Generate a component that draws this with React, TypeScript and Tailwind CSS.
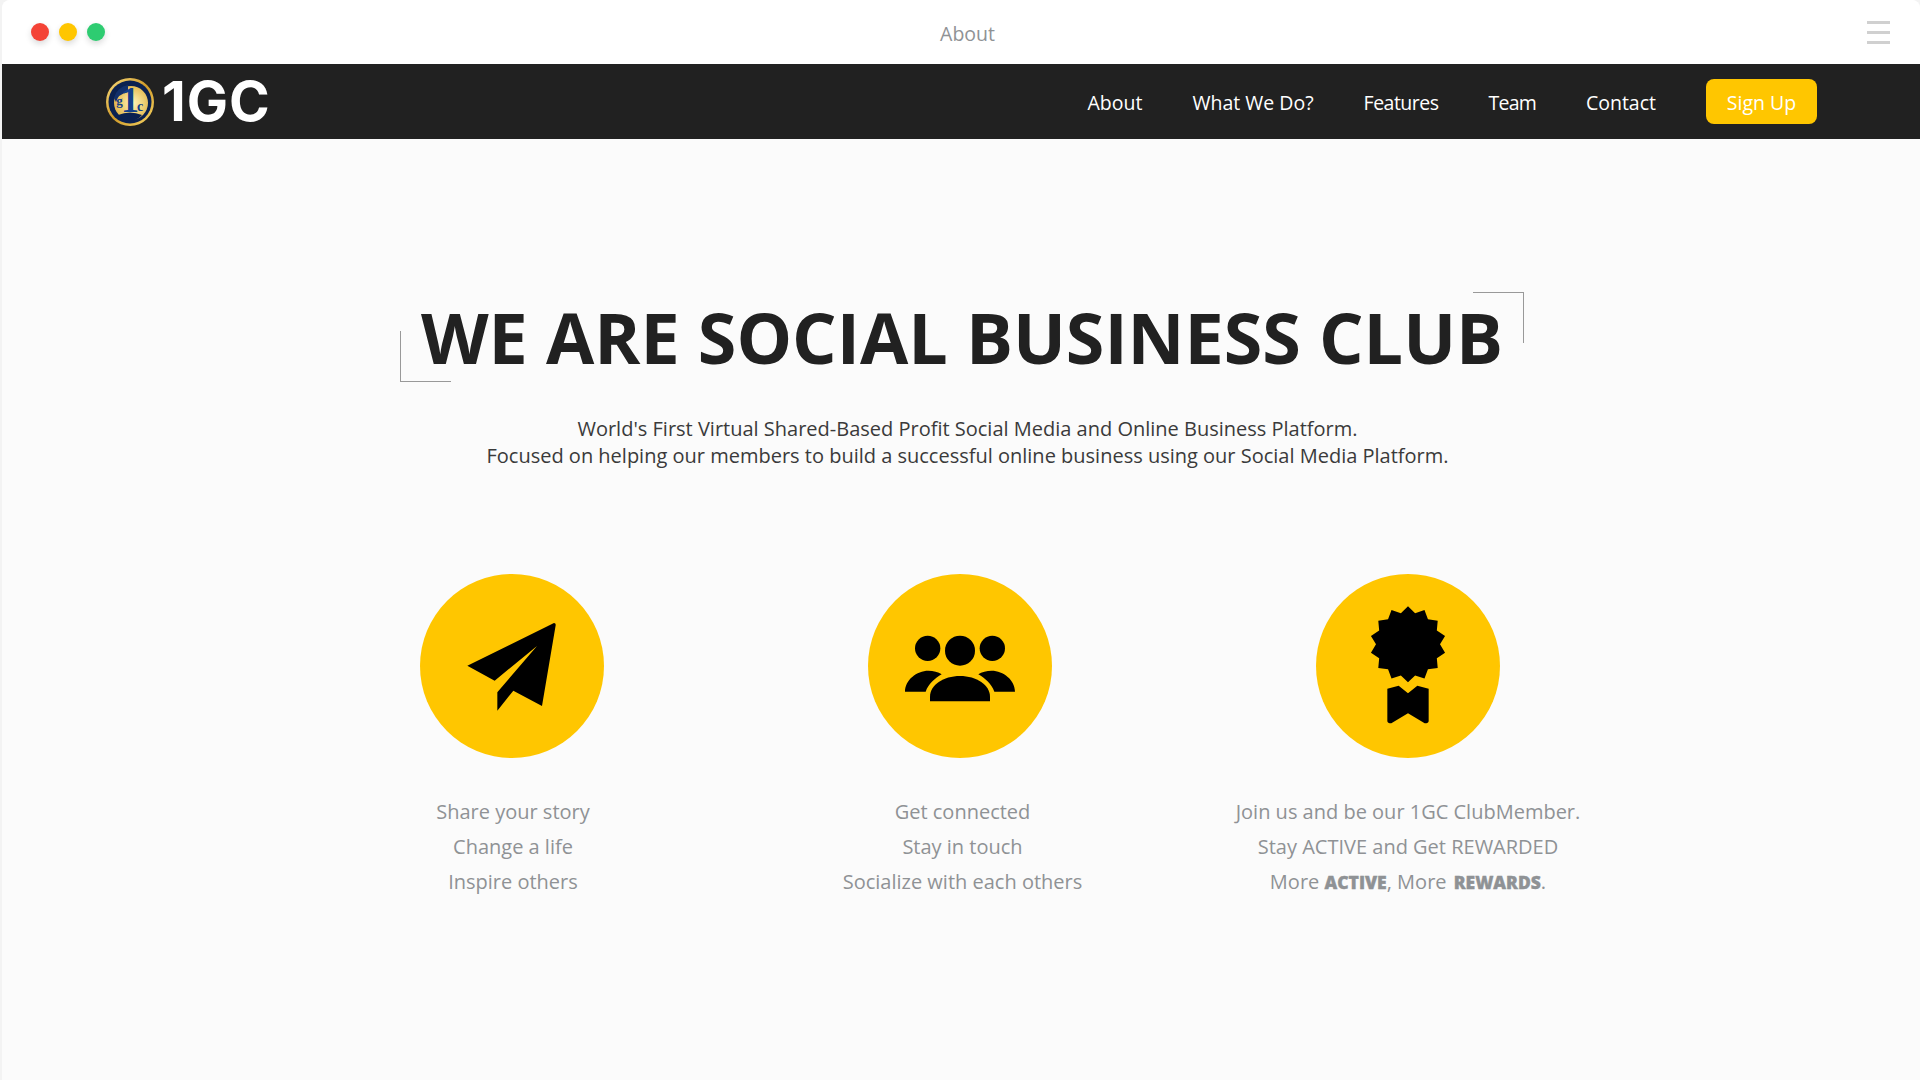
import React from "react";

const navLinks = [
  { label: "About", className: "" },
  { label: "What We Do?", className: "" },
  { label: "Features", className: "tracking-[-0.5px]" },
  { label: "Team", className: "tracking-[-0.8px]" },
  { label: "Contact", className: "" },
];

// 14 point seal for the badge icon
const sealPoints = Array.from({ length: 28 }, (_, i) => {
  const angle = (i * Math.PI) / 14;
  const radius = i % 2 === 0 ? 114 : 96;
  return `${300 + radius * Math.sin(angle)},${238 - radius * Math.cos(angle)}`;
}).join(" ");

const PlaneIcon = () => (
  <svg viewBox="30 27 552 552" className="w-full h-full">
    <path d="M432 174 Q438 174 437 181 L396 423 L310 377 L262 437 V382 L381 243 L254 347 L172 302 Z" fill="#000" />
  </svg>
);

const PeopleIcon = () => (
  <svg viewBox="24 27 552 552" className="w-full h-full">
    <g fill="#000">
      <circle cx="203" cy="250" r="38" />
      <circle cx="300" cy="257" r="45" />
      <circle cx="397" cy="250" r="38" />
      <path d="M210 409 V395 C210 360 250 333 300 333 C350 333 390 360 390 395 V409 Z" />
      <path d="M135 380 C135 345 170 317 205 317 C220 317 235 321 245 328 C225 340 205 357 197 380 Z" />
      <path d="M465 380 C465 345 430 317 395 317 C380 317 365 321 355 328 C375 340 395 357 403 380 Z" />
    </g>
  </svg>
);

const BadgeIcon = () => (
  <svg viewBox="24 27 552 552" className="w-full h-full">
    <polygon points={sealPoints} fill="#000" />
    <path d="M238 371 L272 362 L300 385 L328 362 L362 371 V468 Q362 475 350 475 L300 445 L250 475 Q238 475 238 468 Z" fill="#000" />
  </svg>
);

const Coin = () => (
  <svg viewBox="0 0 48 48" className="w-12 h-12 shrink-0">
    <defs>
      <linearGradient id="ring" x1="0" y1="0" x2="1" y2="1">
        <stop offset="0" stopColor="#f9dd80" />
        <stop offset="0.5" stopColor="#d09a28" />
        <stop offset="1" stopColor="#f8d768" />
      </linearGradient>
      <radialGradient id="face" cx="0.55" cy="0.5" r="0.6">
        <stop offset="0" stopColor="#fff6b8" />
        <stop offset="1" stopColor="#e0b040" />
      </radialGradient>
    </defs>
    <circle cx="24" cy="24" r="24" fill="url(#ring)" />
    <circle cx="24" cy="24" r="21.5" fill="#0b2150" />
    <circle cx="25" cy="25" r="17" fill="url(#face)" />
    <path d="M8 20 A17 17 0 0 1 22 7 L22 14 Q12 16 10 24 Z" fill="#12306b" />
    <text x="24" y="34" fontFamily="Liberation Serif, serif" fontWeight="700" fontSize="36" fill="#12408a" textAnchor="middle">1</text>
    <text x="13.5" y="27" fontFamily="Liberation Serif, serif" fontWeight="700" fontSize="13" fill="#12408a" textAnchor="middle">g</text>
    <text x="34" y="33" fontFamily="Liberation Serif, serif" fontWeight="700" fontSize="14" fill="#12408a" textAnchor="middle">c</text>
    <path d="M12 37 Q24 32 36 37 Q31 43 24 43 Q17 43 12 37 Z" fill="#0b2150" />
  </svg>
);

const Feature = ({
  icon,
  textClass = "",
  children,
}: {
  icon: React.ReactNode;
  textClass?: string;
  children: React.ReactNode;
}) => (
  <div className="flex flex-col items-center">
    <div className="w-[184px] h-[184px] ml-[-2px] rounded-full bg-[#ffc600]">{icon}</div>
    <div className={`mt-9 text-center text-[20px] leading-[35px] text-[#8f9295] ${textClass}`}>{children}</div>
  </div>
);

export default function App() {
  return (
    <div className="h-screen overflow-hidden bg-[#f3f3f3] pl-0.5 font-['Open_Sans',sans-serif]">
      <div className="h-full flex flex-col bg-[#fbfbfb] rounded-tl-lg rounded-tr-lg overflow-hidden">
        <div className="relative h-16 shrink-0 bg-white flex items-center justify-between pl-[29px] pr-[30px]">
          <div className="flex gap-[10px]">
            <span className="w-[18px] h-[18px] rounded-full bg-[#f44336] shadow-[0_3px_6px_rgba(0,0,0,0.15)]" />
            <span className="w-[18px] h-[18px] rounded-full bg-[#ffc600] shadow-[0_3px_6px_rgba(0,0,0,0.15)]" />
            <span className="w-[18px] h-[18px] rounded-full bg-[#2ecc71] shadow-[0_3px_6px_rgba(0,0,0,0.15)]" />
          </div>
          <span className="absolute left-0 right-0 top-[21px] pl-[13px] text-center text-[19.5px] leading-[26px] text-[#8f9295]">About</span>
          <div className="flex flex-col gap-[7px] w-[23px] mb-[-1px]">
            <span className="h-[3px] bg-[#d0d0d0]" />
            <span className="h-[3px] bg-[#d0d0d0]" />
            <span className="h-[3px] bg-[#d0d0d0]" />
          </div>
        </div>

        <nav className="h-[75px] shrink-0 bg-[#212121] flex items-center justify-between pl-[104px] pr-[103px]">
          <div className="flex items-center gap-2">
            <Coin />
            <span className="font-['Inter',sans-serif] font-bold text-[55px] leading-none tracking-[1px] text-white">1GC</span>
          </div>
          <div className="flex items-center gap-[50px]">
            {navLinks.map((link) => (
              <a key={link.label} className={`pt-[2px] text-[19.5px] text-white ${link.className}`}>
                {link.label}
              </a>
            ))}
            <a className="pt-[2px] w-[111px] h-[45px] rounded-lg bg-[#ffc600] flex items-center justify-center text-[19.5px] text-white">
              Sign Up
            </a>
          </div>
        </nav>

        <main className="flex flex-col items-center pt-[153px]">
          <h1 className="relative ml-[2px] px-[21px] text-[70px] leading-[90px] font-bold text-[#212121] whitespace-nowrap">
            <span className="absolute left-0 bottom-0 w-[51px] h-[51px] border-l border-b border-[#999999]" />
            <span className="absolute right-0 top-0 w-[51px] h-[51px] border-r border-t border-[#999999]" />
            WE ARE SOCIAL BUSINESS CLUB
          </h1>
          <p className="mt-[33px] pl-[13px] text-center text-[20px] leading-[27px] text-[#3a3a3a]">
            World's First Virtual Shared-Based Profit Social Media and Online Business Platform.
            <br />
            Focused on helping our members to build a successful online business using our Social Media Platform.
          </p>

          <div className="mt-[105px] w-[1344px] grid grid-cols-3">
            <Feature icon={<PlaneIcon />}>
              Share your story
              <br />
              Change a life
              <br />
              Inspire others
            </Feature>
            <Feature icon={<PeopleIcon />} textClass="pl-[3px]">
              Get connected
              <br />
              Stay in touch
              <br />
              Socialize with each others
            </Feature>
            <Feature icon={<BadgeIcon />} textClass="pr-[2px]">
              Join us and be our 1GC ClubMember.
              <br />
              Stay ACTIVE and Get REWARDED
              <br />
              More <b className="font-extrabold text-[17.5px] [-webkit-text-stroke:0.4px]">ACTIVE</b>, More <b className="ml-[2px] font-extrabold text-[17.5px] [-webkit-text-stroke:0.4px]">REWARDS</b>.
            </Feature>
          </div>
        </main>
      </div>
    </div>
  );
}
